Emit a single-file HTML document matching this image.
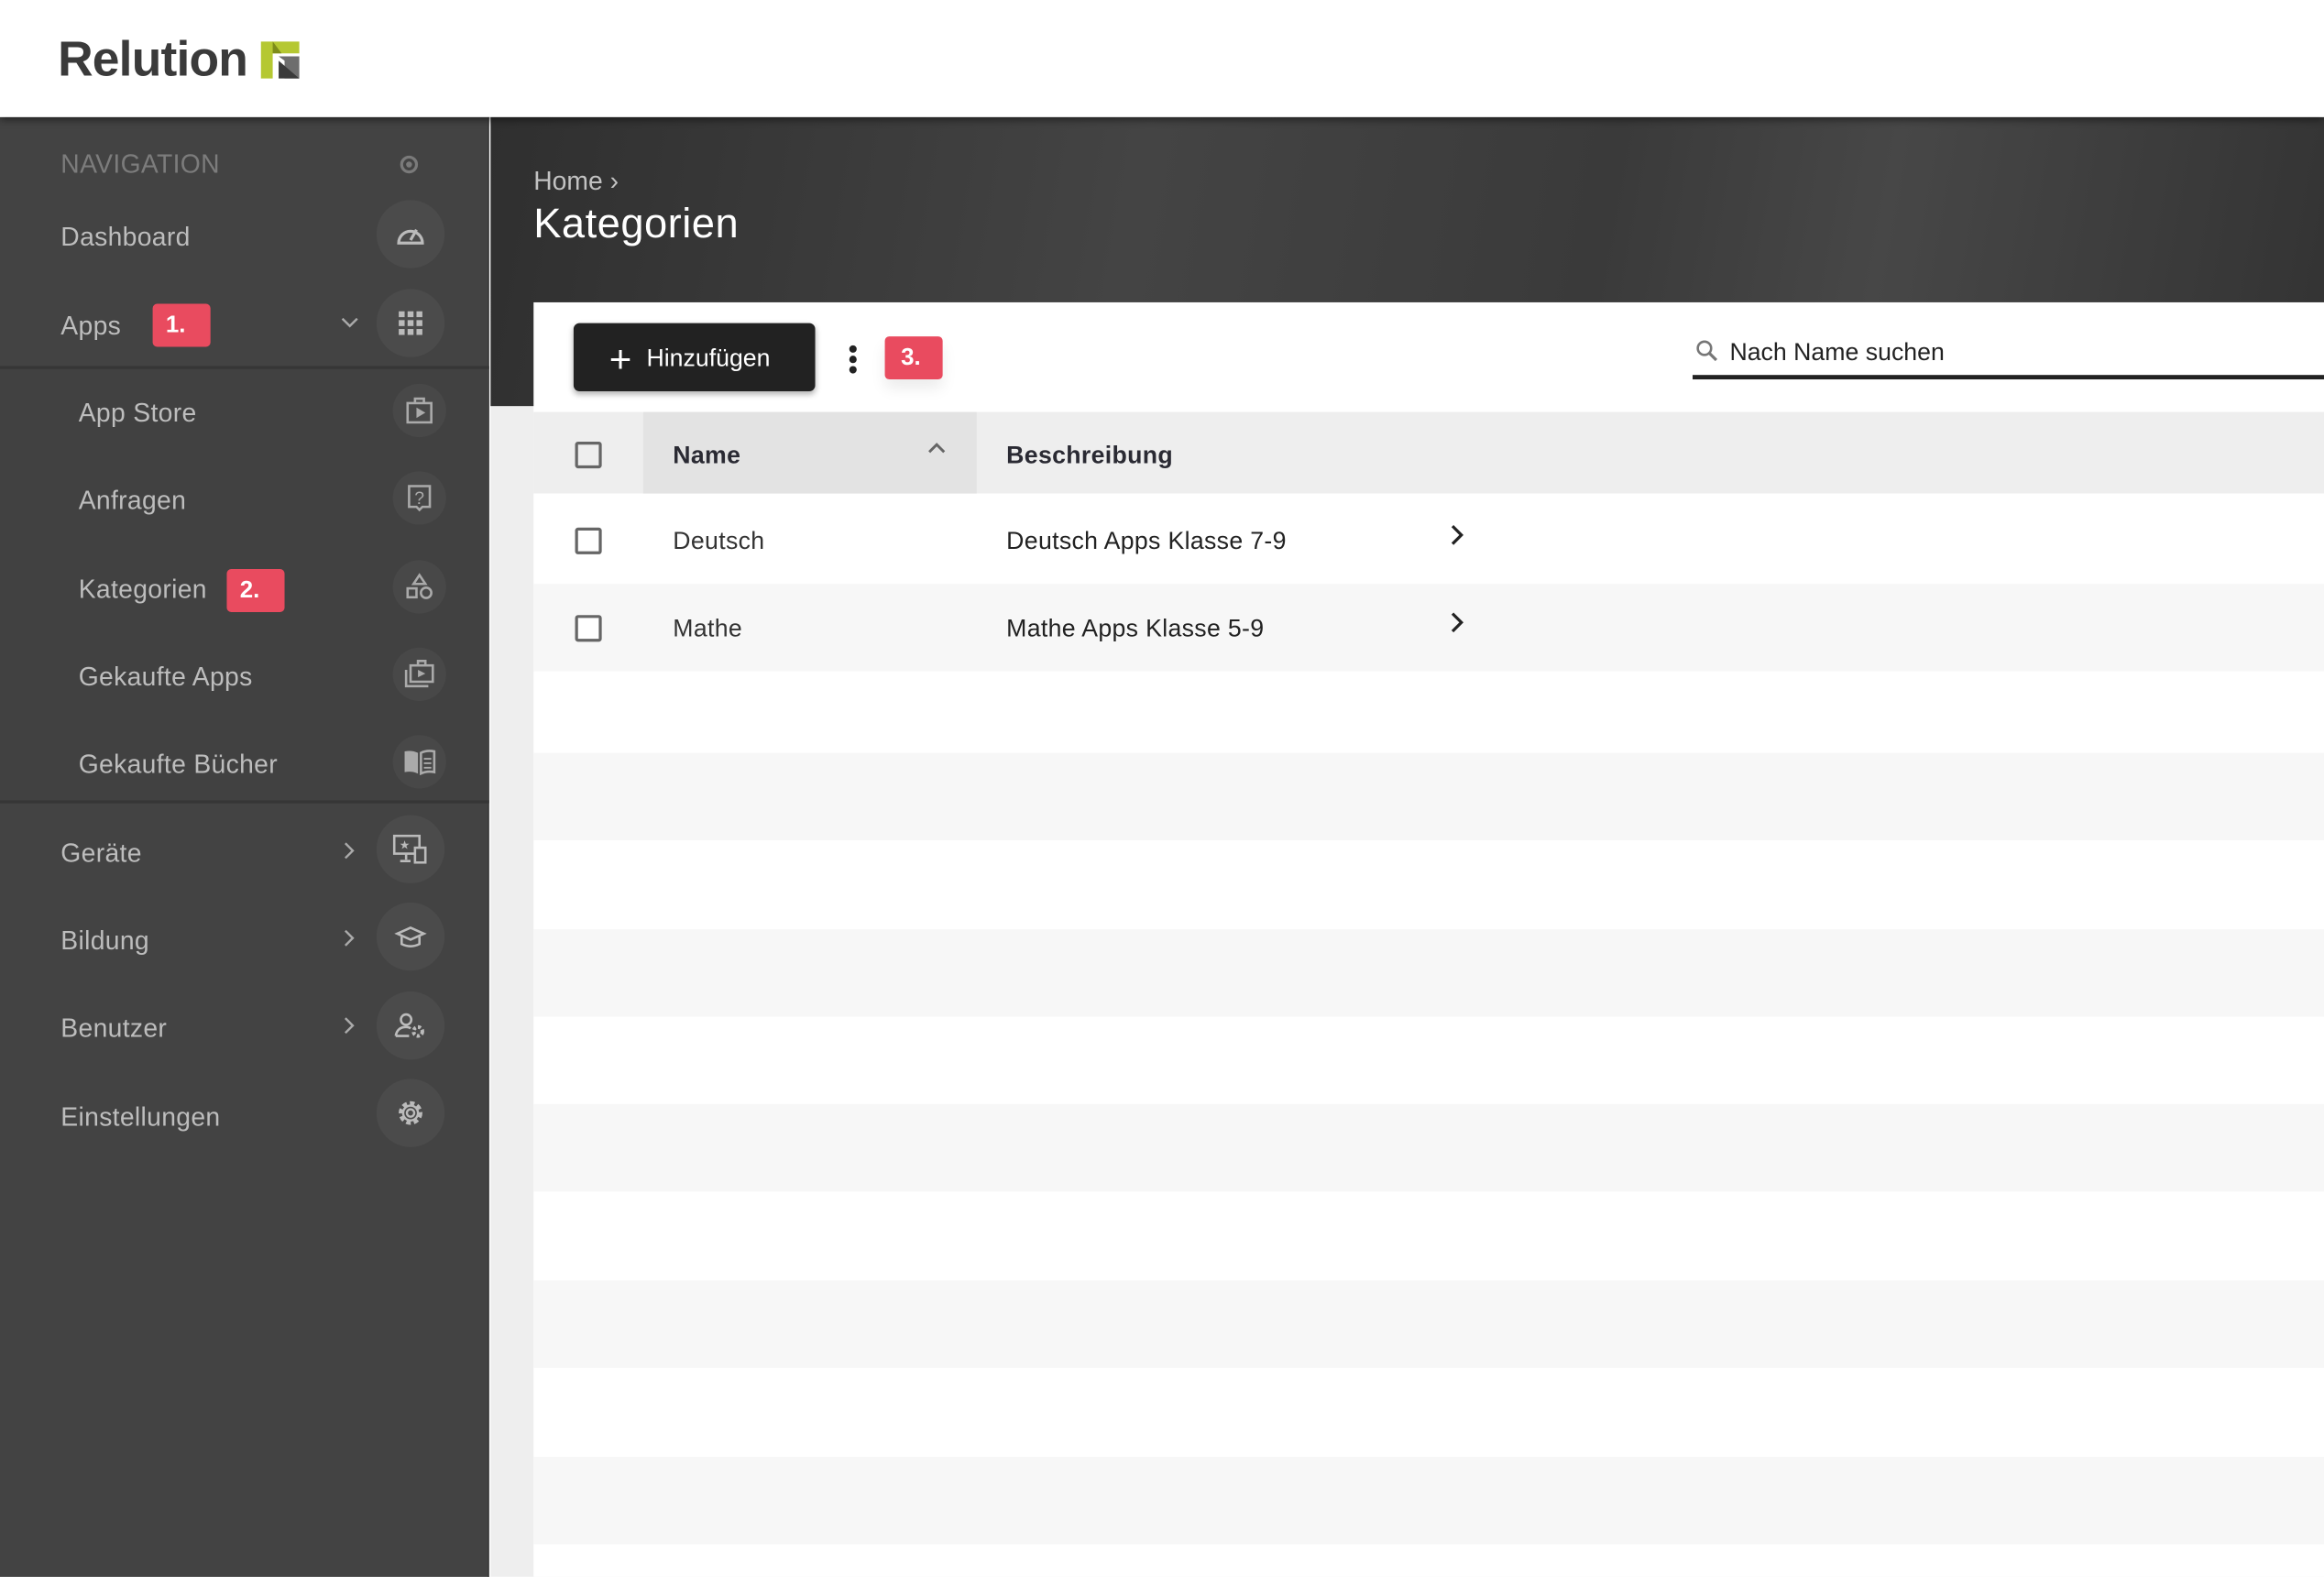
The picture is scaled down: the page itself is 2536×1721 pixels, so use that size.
<!DOCTYPE html>
<html><head><meta charset="utf-8"><style>
*{box-sizing:border-box;margin:0;padding:0}
html,body{width:2536px;height:1720px;overflow:hidden;background:#fff;font-family:"Liberation Sans","DejaVu Sans",sans-serif}
#s{position:absolute;left:0;top:0;width:1568px;height:1064px;transform:scale(1.61735);transform-origin:0 0;overflow:hidden}
.a{position:absolute}
.top{left:0;top:0;width:1568px;height:79px;background:#fff;z-index:3;box-shadow:0 2px 5px rgba(0,0,0,.5)}
.side{left:0;top:79px;width:330px;height:990px;background:#434343;border-right:1px solid #3a3a3a}
.it{position:absolute;left:41px;font-size:17.5px;color:#bdbdbd;transform:translateY(-45%);white-space:nowrap;letter-spacing:.2px}
.sub{left:53px}
.circ{position:absolute;width:46px;height:46px;border-radius:50%;background:#4b4b4b;transform:translate(-50%,-50%);display:flex;align-items:center;justify-content:center}
.sc{width:36px;height:36px;background:#484848}
.badge{position:absolute;background:#e94b5f;color:#fff;font-weight:bold;font-size:16px;border-radius:3px;display:flex;align-items:center;justify-content:center;padding-right:8px}
.chev{position:absolute;transform:translate(-50%,-50%)}
.row{position:absolute;left:360px;width:1208px;height:59.4px}
.g{background:#f7f7f7}
.cb{position:absolute;left:388px;width:18px;height:18px;border:2px solid #666;border-radius:2px;background:#fff}
.td{position:absolute;font-size:16.5px;color:#333;transform:translateY(-45%);letter-spacing:.2px}
</style></head><body><div id="s">
<div class="a top">
 <div class="a" style="left:39px;top:21px;font-size:33px;font-weight:bold;color:#3a3a3a;letter-spacing:-.5px">Relution</div>
 <svg class="a" style="left:176px;top:28px" width="26" height="25" viewBox="0 0 26 25"><path d="M0 0H26V8H8V25H0Z" fill="#b5c832"/><path d="M8 0L14 8H8Z" fill="#7d8c1a"/><path d="M12 10H26V25H16V13Z" fill="#6e6e6e"/><path d="M12 13L26 25H12Z" fill="#3a3a3a"/></svg>
</div>
<div class="a side"></div>
<div class="a" style="left:0;top:247px;width:330px;height:295px;background:#414141;border-top:2px solid #363636;border-bottom:2px solid #363636"></div>
<div class="it" style="top:110px;color:#7c7c7c">NAVIGATION</div>
<div class="a" style="left:270px;top:105px;width:12px;height:12px;border:2px solid #7a7a7a;border-radius:50%"><div style="margin:2px;width:4px;height:4px;background:#7a7a7a;border-radius:50%"></div></div>
<div class="it" style="top:159px">Dashboard</div>
<div class="it" style="top:219px">Apps</div>
<div class="badge" style="left:103px;top:205px;width:39px;height:29px">1.</div>
<div class="it sub" style="top:278px">App Store</div>
<div class="it sub" style="top:337px">Anfragen</div>
<div class="it sub" style="top:397px">Kategorien</div>
<div class="badge" style="left:153px;top:384px;width:39px;height:29px">2.</div>
<div class="it sub" style="top:456px">Gekaufte Apps</div>
<div class="it sub" style="top:515px">Gekaufte Bücher</div>
<div class="it" style="top:575px">Geräte</div>
<div class="it" style="top:634px">Bildung</div>
<div class="it" style="top:693px">Benutzer</div>
<div class="it" style="top:753px">Einstellungen</div>
<svg class="chev" style="left:236px;top:218px" width="12" height="8"><path d="M1 1L6 6L11 1" fill="none" stroke="#aaa" stroke-width="1.5"/></svg>
<svg class="chev" style="left:236px;top:574px" width="8" height="12"><path d="M1 1L6 6L1 11" fill="none" stroke="#aaa" stroke-width="1.5"/></svg>
<svg class="chev" style="left:236px;top:633px" width="8" height="12"><path d="M1 1L6 6L1 11" fill="none" stroke="#aaa" stroke-width="1.5"/></svg>
<svg class="chev" style="left:236px;top:692px" width="8" height="12"><path d="M1 1L6 6L1 11" fill="none" stroke="#aaa" stroke-width="1.5"/></svg>
<div class="circ" style="left:277px;top:158px"><svg width="20" height="16" viewBox="0 0 20 16"><path d="M2 14A8 8 0 1 1 18 14Z" fill="none" stroke="#bbb" stroke-width="2"/><path d="M10 12L14 5" stroke="#bbb" stroke-width="2"/></svg></div>
<div class="circ" style="left:277px;top:218px"><svg width="16" height="16"><g fill="#bbb"><rect x="0" y="0" width="4" height="4"/><rect x="6" y="0" width="4" height="4"/><rect x="12" y="0" width="4" height="4"/><rect x="0" y="6" width="4" height="4"/><rect x="6" y="6" width="4" height="4"/><rect x="12" y="6" width="4" height="4"/><rect x="0" y="12" width="4" height="4"/><rect x="6" y="12" width="4" height="4"/><rect x="12" y="12" width="4" height="4"/></g></svg></div>
<div class="circ sc" style="left:283px;top:277px"><svg width="20" height="20" viewBox="0 0 20 20"><rect x="2" y="5" width="16" height="13" fill="none" stroke="#aaa" stroke-width="1.6"/><path d="M7 5V2H13V5" fill="none" stroke="#aaa" stroke-width="1.6"/><path d="M8 8L14 11.5L8 15Z" fill="#aaa"/></svg></div>
<div class="circ sc" style="left:283px;top:336px"><svg width="20" height="20" viewBox="0 0 20 20"><path d="M3 2H17V16H12L10 18L8 16H3Z" fill="none" stroke="#aaa" stroke-width="1.6"/><text x="10" y="14" font-size="12" fill="#aaa" text-anchor="middle" font-family="Liberation Sans">?</text></svg></div>
<div class="circ sc" style="left:283px;top:396px"><svg width="20" height="20" viewBox="0 0 20 20"><path d="M10 2L14 8H6Z" fill="none" stroke="#aaa" stroke-width="1.6"/><rect x="2" y="11" width="6" height="6" fill="none" stroke="#aaa" stroke-width="1.6"/><circle cx="14.5" cy="14" r="3.5" fill="none" stroke="#aaa" stroke-width="1.6"/></svg></div>
<div class="circ sc" style="left:283px;top:455px"><svg width="22" height="20" viewBox="0 0 22 20"><rect x="5" y="4" width="15" height="11" fill="none" stroke="#aaa" stroke-width="1.6"/><path d="M10 4V1H15V4" fill="none" stroke="#aaa" stroke-width="1.6"/><path d="M2 7V18H17" fill="none" stroke="#aaa" stroke-width="1.6"/><path d="M10 7L15 9.5L10 12Z" fill="#aaa"/></svg></div>
<div class="circ sc" style="left:283px;top:514px"><svg width="22" height="18" viewBox="0 0 22 18"><path d="M1 2Q6 1 10 3V17Q6 15 1 16Z" fill="#aaa"/><path d="M12 3Q16 1 21 2V16Q16 15 12 17Z" fill="none" stroke="#aaa" stroke-width="1.6"/><path d="M14 7H19M14 10H19M14 13H19" stroke="#aaa" stroke-width="1.2"/></svg></div>
<div class="circ" style="left:277px;top:573px"><svg width="24" height="20" viewBox="0 0 24 20"><rect x="1" y="1" width="17" height="12" fill="none" stroke="#bbb" stroke-width="1.6"/><path d="M9 13V17M5 18H12" stroke="#bbb" stroke-width="1.6"/><rect x="15" y="9" width="7" height="10" fill="#4b4b4b" stroke="#bbb" stroke-width="1.6"/><text x="8" y="10" font-size="8" fill="#bbb" text-anchor="middle">★</text></svg></div>
<div class="circ" style="left:277px;top:632px"><svg width="22" height="16" viewBox="0 0 22 16"><path d="M11 2L20 6L11 10L2 6Z" fill="none" stroke="#bbb" stroke-width="1.6"/><path d="M5 8V13Q11 16 17 13V8" fill="none" stroke="#bbb" stroke-width="1.6"/></svg></div>
<div class="circ" style="left:277px;top:692px"><svg width="22" height="18" viewBox="0 0 22 18"><circle cx="8" cy="5" r="3.5" fill="none" stroke="#bbb" stroke-width="1.6"/><path d="M1 16Q2 10 8 10Q10 10 11 11M1 16H10" fill="none" stroke="#bbb" stroke-width="1.6"/><circle cx="16" cy="13" r="3" fill="none" stroke="#bbb" stroke-width="2.5" stroke-dasharray="2 1.5"/></svg></div>
<div class="circ" style="left:277px;top:751px"><svg width="20" height="20" viewBox="0 0 20 20"><circle cx="10" cy="10" r="6.5" fill="none" stroke="#bbb" stroke-width="3" stroke-dasharray="3 2"/><circle cx="10" cy="10" r="5" fill="#4b4b4b" stroke="#bbb" stroke-width="1.5"/><circle cx="10" cy="10" r="2.5" fill="none" stroke="#bbb" stroke-width="1.5"/></svg></div>
<!-- main -->
<div class="a" style="left:331px;top:79px;width:1237px;height:985px;background:#eee"></div>
<div class="a" style="left:331px;top:79px;width:1237px;height:195px;background:linear-gradient(100deg,#2f2f2f 0%,#444 35%,#3a3a3a 60%,#474747 75%,#333 100%)"></div>
<div class="a" style="left:360px;top:112px;font-size:17.5px;color:#c2c2c2">Home ›</div>
<div class="a" style="left:360px;top:135px;font-size:28px;color:#fff;letter-spacing:.3px">Kategorien</div>
<div class="a" style="left:360px;top:204px;width:1208px;height:860px;background:#fff"></div>
<div class="a" style="left:387px;top:218px;width:163px;height:46px;background:#222;border-radius:4px;box-shadow:0 2px 4px rgba(0,0,0,.3);color:#fff;font-size:16.5px;display:flex;align-items:center;padding-left:24px;padding-top:2px"><span style="font-size:26px;font-weight:300;margin-right:10px;line-height:1">+</span>Hinzufügen</div>
<div class="a" style="left:573px;top:233px;width:5px;height:5px;border-radius:50%;background:#222"></div>
<div class="a" style="left:573px;top:240px;width:5px;height:5px;border-radius:50%;background:#222"></div>
<div class="a" style="left:573px;top:247px;width:5px;height:5px;border-radius:50%;background:#222"></div>
<div class="badge" style="left:597px;top:227px;width:39px;height:29px;padding:0 4px 0 0;box-shadow:0 6px 10px rgba(0,0,0,.08)">3.</div>
<svg class="a" style="left:1144px;top:229px" width="16" height="16"><circle cx="6" cy="6" r="4.5" fill="none" stroke="#777" stroke-width="1.6"/><path d="M9.5 9.5L14 14" stroke="#777" stroke-width="2"/></svg>
<div class="a" style="left:1167px;top:229px;font-size:16.5px;color:#222">Nach Name suchen</div>
<div class="a" style="left:1142px;top:253px;width:426px;height:2.5px;background:#222"></div>
<div class="a" style="left:360px;top:278px;width:1208px;height:55px;background:#eee"></div>
<div class="a" style="left:434px;top:278px;width:225px;height:55px;background:#e3e3e3"></div>
<div class="cb" style="top:298px;background:transparent"></div>
<div class="td" style="left:454px;top:307px;font-weight:bold;color:#2a2a33">Name</div>
<svg class="a" style="left:626px;top:298px" width="12" height="8"><path d="M1 7L6 2L11 7" fill="none" stroke="#666" stroke-width="1.8"/></svg>
<div class="td" style="left:679px;top:307px;font-weight:bold;color:#2a2a33">Beschreibung</div>
<div class="row g" style="top:394px"></div>
<div class="row g" style="top:508px"></div>
<div class="row g" style="top:627px"></div>
<div class="row g" style="top:745px"></div>
<div class="row g" style="top:864px"></div>
<div class="row g" style="top:983px"></div>
<div class="cb" style="top:356px"></div>
<div class="td" style="left:454px;top:365px">Deutsch</div>
<div class="td" style="left:679px;top:365px;color:#222">Deutsch Apps Klasse 7-9</div>
<svg class="a" style="left:978px;top:354px" width="10" height="14"><path d="M2 1L8 7L2 13" fill="none" stroke="#222" stroke-width="2"/></svg>
<div class="cb" style="top:415px"></div>
<div class="td" style="left:454px;top:424px">Mathe</div>
<div class="td" style="left:679px;top:424px;color:#222">Mathe Apps Klasse 5-9</div>
<svg class="a" style="left:978px;top:413px" width="10" height="14"><path d="M2 1L8 7L2 13" fill="none" stroke="#222" stroke-width="2"/></svg>
</div></body></html>
